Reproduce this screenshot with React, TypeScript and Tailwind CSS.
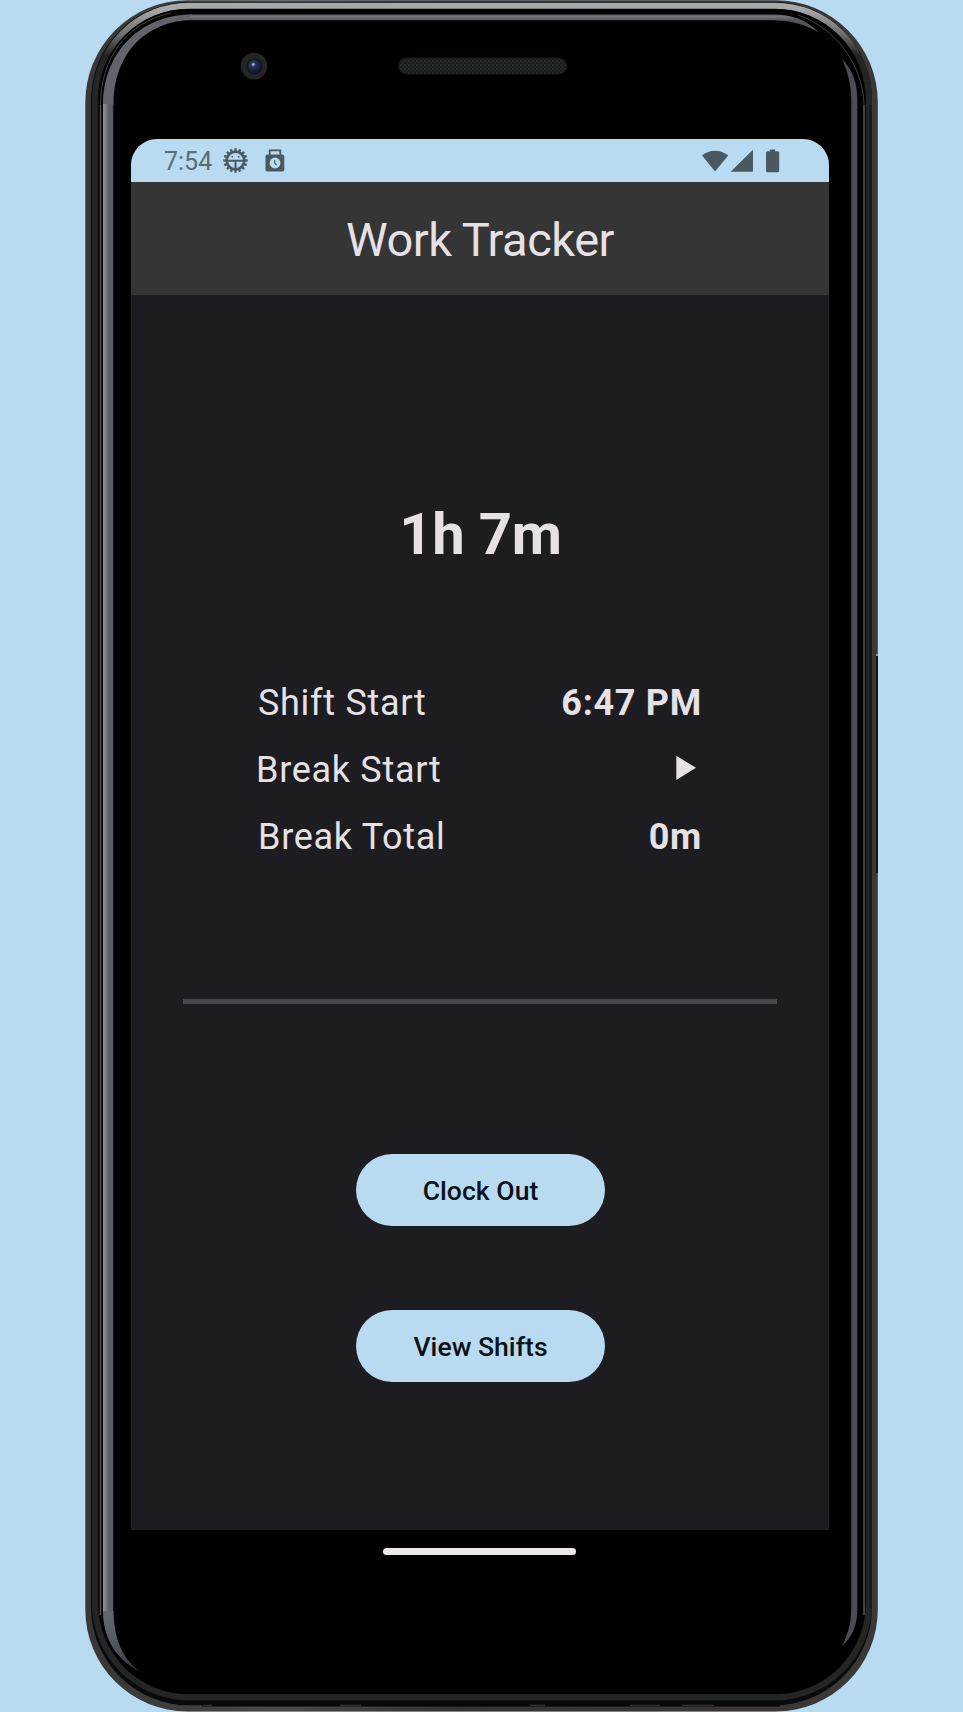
import React from "react";

const teeth = Array.from({ length: 16 }, (_, i) => i * 22.5);

function PhoneFrame() {
  return (
    <svg className="absolute inset-0" width="963" height="1712" viewBox="0 0 963 1712" fill="none" aria-hidden="true">
      <defs>
        <linearGradient id="rim" x1="0" y1="0" x2="0" y2="110" gradientUnits="userSpaceOnUse">
          <stop offset="0" stopColor="#a9abac" />
          <stop offset="0.1" stopColor="#a4a6a7" />
          <stop offset="0.32" stopColor="#6c6c6c" />
          <stop offset="0.5" stopColor="#242424" />
          <stop offset="1" stopColor="#242525" />
        </linearGradient>
        <linearGradient id="edge" x1="85" y1="0" x2="878" y2="0" gradientUnits="userSpaceOnUse">
          <stop offset="0" stopColor="#383737" />
          <stop offset="0.25" stopColor="#484848" />
          <stop offset="0.45" stopColor="#333435" />
          <stop offset="1" stopColor="#3b3837" />
        </linearGradient>
        <linearGradient id="glint" x1="103" y1="0" x2="114" y2="0" gradientUnits="userSpaceOnUse">
          <stop offset="0" stopColor="#929495" />
          <stop offset="0.3" stopColor="#777a7d" />
          <stop offset="0.5" stopColor="#5c5f68" />
          <stop offset="0.85" stopColor="#585b65" />
          <stop offset="1" stopColor="#24252a" />
        </linearGradient>
        <linearGradient id="lowglint" x1="103" y1="1610" x2="141" y2="1672" gradientUnits="userSpaceOnUse">
          <stop offset="0" stopColor="#66696f" />
          <stop offset="0.6" stopColor="#505259" />
          <stop offset="1" stopColor="#2c2d31" />
        </linearGradient>
        <linearGradient id="topglint" x1="0" y1="14" x2="0" y2="20" gradientUnits="userSpaceOnUse">
          <stop offset="0" stopColor="#55535a" />
          <stop offset="0.4" stopColor="#77747d" />
          <stop offset="1" stopColor="#55535b" />
        </linearGradient>
        <radialGradient id="lens" cx="0.4" cy="0.35" r="0.7">
          <stop offset="0" stopColor="#4a5c90" />
          <stop offset="0.35" stopColor="#222e56" />
          <stop offset="1" stopColor="#0d1226" />
        </radialGradient>
        <pattern id="mesh" width="4" height="4" patternUnits="userSpaceOnUse">
          <rect width="4" height="4" fill="#1a1c1c" />
          <circle cx="1" cy="1" r="0.8" fill="#373a3a" />
          <circle cx="3" cy="3" r="0.8" fill="#313333" />
        </pattern>
      </defs>
      <rect x="85.3" y="0.3" width="792.5" height="1711.2" rx="102" fill="url(#edge)" />
      <rect x="91" y="2" width="781" height="1703.3" rx="98" fill="#0a0a0a" />
      <rect x="95" y="5.8" width="774" height="1691.5" rx="94" stroke="url(#rim)" strokeWidth="6" />
      <rect x="98.5" y="9" width="766.5" height="1685" rx="90" fill="#000" />
      <path d="M100.5 105V1615M864 105V1615" stroke="#555857" strokeWidth="1.5" />
      <path d="M100.5 105C100.5 60 125 23 171 13M864 105C863 64 835 28 798 15" stroke="#414343" strokeWidth="1" />
      <path d="M103 105C103 54 139 14.5 192 14.5H192V20C145 21 113.5 54 113.5 105Z" fill="#62636b" />
      <path d="M103 104H113.5V1611H103Z" fill="url(#glint)" />
      <path d="M113.5 1611C114 1640 123 1660 141 1672C116 1660 103 1638 103 1611Z" fill="url(#lowglint)" />
      <path d="M190 14.5H773C792 14.5 807 20 819 32.5C804 24 790 20.3 771 20.3H190Z" fill="url(#topglint)" />
      <path d="M842 59C853 71 857.3 82 857.3 101V1610C857.3 1627 851 1638 842 1646C849 1632 851.3 1622 851.3 1605V100C851 85 848 72 842 59Z" fill="#4d4b54" />
      <path d="M870.6 105V1608" stroke="#151515" strokeWidth="1.6" />
      <path d="M877 656V873" stroke="#151313" strokeWidth="2" />
      <circle cx="877" cy="655" r="1" fill="#aaa" />
      <path d="M202 1705.5H780" stroke="#050606" strokeWidth="2" />
      <path d="M203 1705.3H212M340 1705.3H361M530 1705.3H545M630 1705.3H660M682 1705.3H714" stroke="#3d3f3f" strokeWidth="1" />
      <circle cx="254" cy="66" r="13.3" fill="#252526" />
      <circle cx="254.5" cy="66.5" r="8" fill="#14151a" />
      <circle cx="254.5" cy="66.5" r="6.8" fill="url(#lens)" />
      <circle cx="253.2" cy="64.5" r="1.3" fill="#a9b5da" />
      <rect x="398.6" y="58" width="168" height="16" rx="8" fill="url(#mesh)" stroke="#181919" strokeWidth="1.2" />
    </svg>
  );
}

function BugGearIcon() {
  return (
    <svg className="ml-[12px]" width="25" height="25" viewBox="-12.5 -12.5 25 25" fill="none" stroke="#4b5a61">
      <circle r="8.8" strokeWidth="2.7" />
      {teeth.map((a) => (
        <path key={a} d="M0 -9.4V-12.2" strokeWidth="2.3" transform={`rotate(${a})`} />
      ))}
      <path d="M-9 0.3H9M0 0.3V9" strokeWidth="2" />
      <circle cx="-3.2" cy="-3.8" r="0.9" fill="#4b5a61" stroke="none" />
      <circle cx="3.2" cy="-3.8" r="0.9" fill="#4b5a61" stroke="none" />
    </svg>
  );
}

function WatchIcon() {
  return (
    <svg className="ml-[17px]" width="20" height="23" viewBox="0 0 20 23" fill="none">
      <path d="M4.7 7V1.3H15.3V7" stroke="#4b5a61" strokeWidth="1.8" />
      <rect x="0.5" y="5.5" width="18.8" height="17" rx="1.8" fill="#4b5a61" />
      <circle cx="10" cy="14" r="5.4" fill="#b8dbf1" />
      <path d="M9.7 11V14L11.5 16.2" stroke="#4b5a61" strokeWidth="1.2" />
    </svg>
  );
}

function StatusBar() {
  return (
    <div className="flex h-[43px] items-center bg-[#b8dbf1] pl-[33px] pr-[49px]">
      <span className="w-[47px] whitespace-nowrap pt-[3px] text-[25px] leading-[30px] text-[#5a6d76]">7:54</span>
      <BugGearIcon />
      <WatchIcon />
      <svg className="ml-auto" width="79" height="24" viewBox="0 0 79 24" fill="#4b5a61">
        <path d="M1 6.6C8 0 20 0 27.3 6.6L14 22.5Z" />
        <path d="M29.6 22.8L52 0.8V22.8Z" />
        <path d="M68.8 0.5H74V2.3H76.7Q78.2 2.3 78.2 3.8V21.8Q78.2 23.3 76.7 23.3H66.5Q65 23.3 65 21.8V3.8Q65 2.3 66.5 2.3H68.8Z" />
      </svg>
    </div>
  );
}

function PillButton({ children }: { children: React.ReactNode }) {
  return (
    <button className="h-[72px] w-[249px] rounded-full bg-[#b8dbf1] pt-[2px] text-[26.6px] font-medium text-[#0b1215]">
      {children}
    </button>
  );
}

export default function App() {
  return (
    <div className="relative h-[1712px] w-[963px] overflow-hidden bg-[#b8dbf1] font-['Roboto',sans-serif] text-[#e6e1e5]">
      <PhoneFrame />
      <div className="relative flex flex-col items-center pr-[3px] pt-[139px]">
        <main className="flex h-[1391px] w-[698px] flex-col overflow-hidden rounded-t-[26px] bg-[#1d1c21]">
          <StatusBar />
          <header className="flex h-[113px] items-center justify-center bg-[#353535] pt-[3px]">
            <h1 className="text-[47px] leading-[56px] tracking-[-0.5px]">Work Tracker</h1>
          </header>
          <div className="mt-[204px] pl-[1px] text-center text-[58px] font-bold leading-[70px] tracking-[-0.2px]">1h 7m</div>
          <dl className="mt-[101px] flex flex-col pl-[127px] pr-[127px] text-[36px] tracking-[0.7px]">
            <div className="flex h-[66.7px] items-center justify-between">
              <dt>Shift Start</dt>
              <dd className="font-bold">6:47 PM</dd>
            </div>
            <div className="flex h-[66.7px] items-center justify-between">
              <dt className="-ml-[2px]">Break Start</dt>
              <dd className="pb-[5px] pr-[6px]">
                <svg width="20" height="26" viewBox="0 0 20 26" fill="#e6e1e5">
                  <path d="M0.3 0.8L20 12.8L0.3 25Z" />
                </svg>
              </dd>
            </div>
            <div className="flex h-[66.7px] items-center justify-between">
              <dt>Break Total</dt>
              <dd className="font-bold">0m</dd>
            </div>
          </dl>
          <div className="mx-auto mt-[129px] h-[5px] w-[594px] bg-[#48464c]" />
          <div className="mt-[150px] flex flex-col items-center gap-[84px] pl-[1px]">
            <PillButton>Clock Out</PillButton>
            <PillButton>View Shifts</PillButton>
          </div>
        </main>
        <div className="mt-[18px] mr-[1px] h-[7px] w-[193px] rounded-full bg-[#ece8ec]" />
      </div>
    </div>
  );
}
